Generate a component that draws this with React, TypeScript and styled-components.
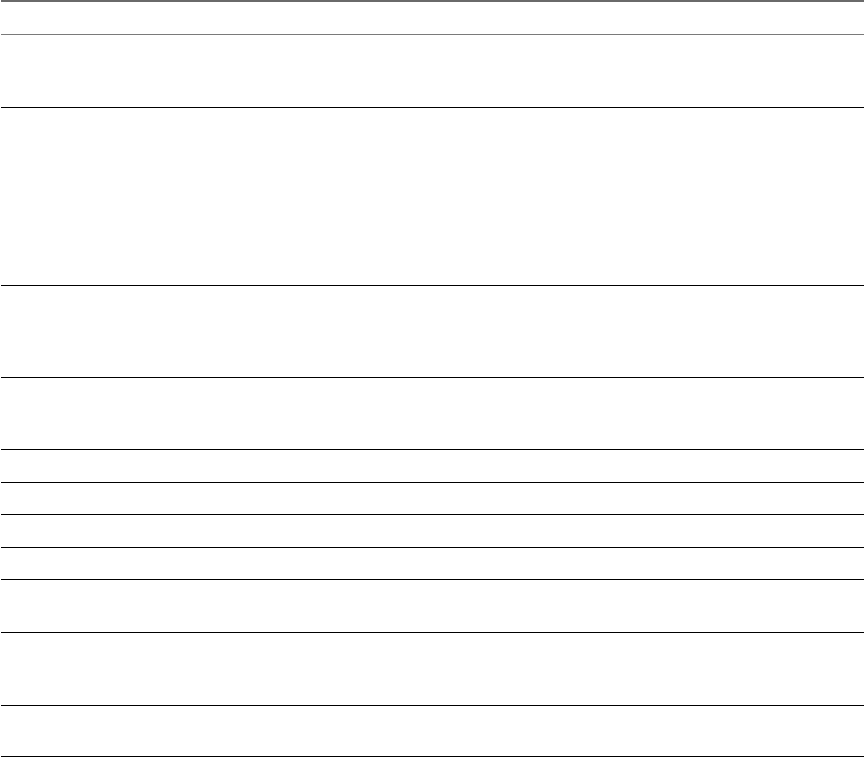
import React from "react";
import styled, { createGlobalStyle } from "styled-components";

const Global = createGlobalStyle`
  html, body {
    margin: 0;
    padding: 0;
    background: #ffffff;
    font-family: "Liberation Sans", Arial, sans-serif;
  }
`;

const Page = styled.div`
  width: 865px;
  height: 757px;
  padding: 0 1px;
  box-sizing: border-box;
  overflow: hidden;
`;

const Table = styled.div`
  display: flex;
  flex-direction: column;
  width: 100%;
`;

const HeaderRow = styled.div`
  height: 32px;
  border-top: 2px solid #6a6a6a;
  border-bottom: 1px solid #7a7a7a;
`;

const Row = styled.div<{ $h: number }>`
  height: ${(p) => p.$h}px;
  border-bottom: 1px solid #000000;
  flex: none;
`;

const rows = [72, 176.5, 91, 71.5, 31.5, 31.5, 31.5, 31.5, 51.5, 72.5, 50];

export default function App() {
  return (
    <Page>
      <Global />
      <Table>
        <HeaderRow />
        {rows.map((h, i) => (
          <Row key={i} $h={h} />
        ))}
      </Table>
    </Page>
  );
}
